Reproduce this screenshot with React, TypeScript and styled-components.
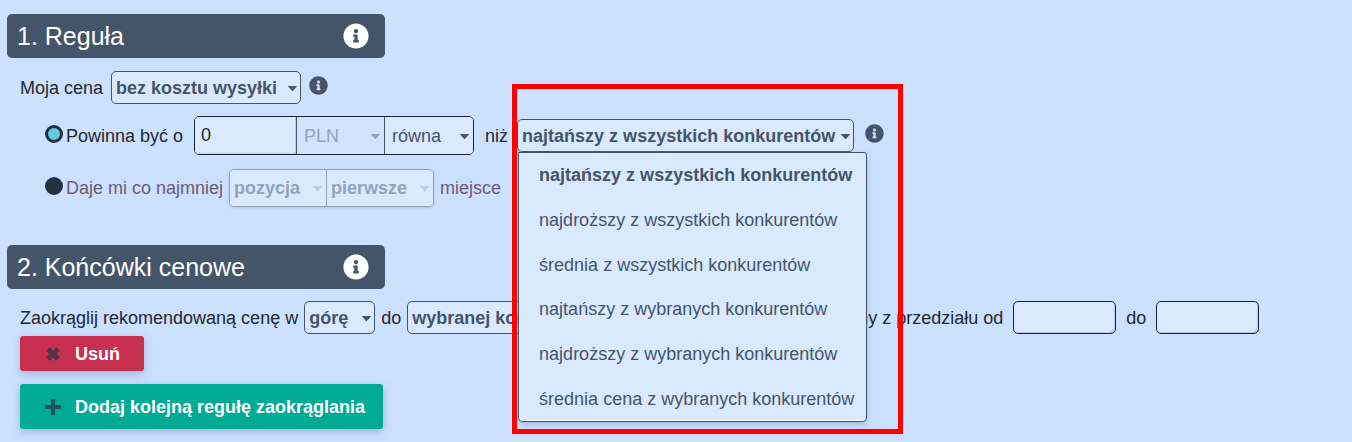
import React from "react";
import styled, { createGlobalStyle, css } from "styled-components";
import { FaInfoCircle } from "react-icons/fa";

const slate = "#455569";
const ink = "#1b2430";
const paper = "#d9e9ff";

const GlobalStyle = createGlobalStyle`
  *, *::before, *::after { box-sizing: border-box; }
  body {
    margin: 0;
    background: #cce0ff;
    color: #23282e;
    font: 18px/22px "Liberation Sans", Arial, sans-serif;
  }
`;

const Page = styled.main`
  padding: 14px 7px 13px;
`;

const SectionBar = styled.header`
  display: flex;
  align-items: center;
  justify-content: space-between;
  width: 378px;
  max-width: 100%;
  height: 44px;
  padding: 0 16px 0 10px;
  border-radius: 5px;
  background: ${slate};
  color: #fff;
`;

const SectionTitle = styled.h2`
  margin: 0;
  font-size: 25px;
  font-weight: 400;
  line-height: 32px;
`;

const InfoButton = styled.button<{ $large?: boolean }>`
  display: flex;
  flex: none;
  margin: 0 0 ${(p) => (p.$large ? 0 : 4)}px;
  padding: 0;
  border: 0;
  background: none;
  color: ${(p) => (p.$large ? "#fff" : slate)};
  font-size: ${(p) => (p.$large ? 26 : 19)}px;
  cursor: pointer;
`;

const Row = styled.div<{ $height: number; $gap: number; $indent?: number; $muted?: boolean }>`
  display: flex;
  align-items: center;
  gap: ${(p) => p.$gap}px;
  height: ${(p) => p.$height}px;
  padding-left: ${(p) => p.$indent ?? 13}px;
  white-space: nowrap;
  color: ${(p) => (p.$muted ? "#705b76" : "inherit")};
`;

const Range = styled.div`
  display: flex;
  align-items: center;
  gap: 10px;
`;

const RadioLabel = styled.label`
  display: flex;
  align-items: center;
  gap: 3px;
`;

const Radio = styled.input`
  appearance: none;
  flex: none;
  width: 18px;
  height: 18px;
  margin: 0 0 4px;
  border: 3px solid #243040;
  border-radius: 50%;
  background: #243040;
  &:checked { background: #63c9de; }
`;

const SelectBox = styled.span<{ $width: number }>`
  position: relative;
  display: flex;
  flex: none;
  width: ${(p) => p.$width}px;
`;

const StyledSelect = styled.select<{ $regular?: boolean; $bare?: boolean }>`
  appearance: none;
  width: 100%;
  height: 33px;
  padding: 0 14px 0 4px;
  border: 1px solid ${slate};
  border-radius: 5px;
  background: ${paper};
  color: ${slate};
  font: inherit;
  font-weight: ${(p) => (p.$regular ? 400 : 700)};
  opacity: 1;
  ${(p) =>
    p.$bare &&
    css`
      height: 100%;
      border: 0;
      border-radius: 0;
    `}
  ${(p) => p.$bare && p.$regular && css`padding-left: 7px;`}
  &:disabled { color: #93a3bc; background: ${(p) => (p.$regular ? "#d1e4ff" : paper)}; }
`;

const Caret = styled.svg<{ $tone?: string }>`
  position: absolute;
  top: calc(50% - 2px);
  right: 4px;
  width: 9px;
  height: 5px;
  fill: ${(p) => p.$tone ?? slate};
  pointer-events: none;
`;

const Group = styled.div<{ $muted?: boolean }>`
  display: flex;
  flex: none;
  height: ${(p) => (p.$muted ? 38 : 39)}px;
  border: 1px solid ${(p) => (p.$muted ? "#93a3bc" : ink)};
  border-radius: 5px;
  overflow: hidden;
  box-shadow: ${(p) => (p.$muted ? "0 1px 3px #7f94b366" : "none")};
  > * + * { border-left: 1px solid ${(p) => (p.$muted ? "#93a3bc" : slate)}; }
`;

const TextInput = styled.input<{ $bare?: boolean }>`
  width: ${(p) => (p.$bare ? 101 : 103)}px;
  height: ${(p) => (p.$bare ? "100%" : "33px")};
  padding: 0 6px;
  border: ${(p) => (p.$bare ? "0" : `1px solid ${ink}`)};
  border-radius: ${(p) => (p.$bare ? 0 : 5)}px;
  background: ${paper};
  box-shadow: inset -2px -2px 1px -1px #b4c8e6;
  color: #23282e;
  font: inherit;
`;

const MenuAnchor = styled.div`
  position: relative;
  margin-left: -2px;
`;

const Menu = styled.ul`
  position: absolute;
  z-index: 2;
  top: 100%;
  left: 1px;
  display: grid;
  grid-auto-rows: 1fr;
  width: 349px;
  height: 270px;
  margin: 0;
  padding: 0;
  border: 1px solid ${slate};
  border-radius: 0 3px 4px 4px;
  background: ${paper};
  box-shadow: 0 3px 6px #6079a055, inset 0 -1px #fff;
  list-style: none;
`;

const MenuItem = styled.li`
  display: flex;
  align-items: center;
  padding-left: 20px;
  color: ${slate};
  &[aria-selected="true"] { font-weight: 700; }
`;

const Highlight = styled.div`
  position: absolute;
  z-index: 3;
  top: -35px;
  left: -5px;
  width: 391px;
  height: 350px;
  border: 5px solid #f00;
  pointer-events: none;
`;

const SecondSection = styled.section`
  padding-top: 23px;
  > header { margin-bottom: 12px; }
`;

const Actions = styled.div`
  display: flex;
  flex-direction: column;
  align-items: flex-start;
  gap: 13px;
  padding: 2px 0 0 13px;
`;

const ActionButton = styled.button<{ $danger?: boolean }>`
  display: flex;
  align-items: center;
  gap: 13px;
  height: ${(p) => (p.$danger ? 35 : 45)}px;
  padding: 0 ${(p) => (p.$danger ? 24 : 18)}px 0 24px;
  border: 0;
  border-radius: 3px;
  background: ${(p) => (p.$danger ? "#c62f4f" : "#00aa95")};
  box-shadow: 0 3px 8px #7088b077;
  color: #fff;
  font: inherit;
  font-weight: 700;
  svg { width: 18px; height: 18px; fill: none; stroke: #2b3648; opacity: 0.75; }
`;

type PickerProps = {
  label: string;
  width: number;
  options: string[];
  regular?: boolean;
  bare?: boolean;
  disabled?: boolean;
  tone?: string;
};

function Picker({ label, width, options, regular, bare, disabled, tone }: PickerProps) {
  return (
    <SelectBox $width={width}>
      <StyledSelect aria-label={label} $regular={regular} $bare={bare} disabled={disabled}>
        {options.map((option) => (
          <option key={option}>{option}</option>
        ))}
      </StyledSelect>
      <Caret viewBox="0 0 9 5" $tone={tone} aria-hidden="true">
        <path d="M0.6 0h7.8q.8 0 .3.7L5.1 4.7q-.6.5-1.2 0L.3.7Q-.2 0 .6 0z" />
      </Caret>
    </SelectBox>
  );
}

function Info({ large }: { large?: boolean }) {
  return (
    <InfoButton type="button" $large={large} aria-label="Informacja">
      <FaInfoCircle />
    </InfoButton>
  );
}

const competitors = [
  "najtańszy z wszystkich konkurentów",
  "najdroższy z wszystkich konkurentów",
  "średnia z wszystkich konkurentów",
  "najtańszy z wybranych konkurentów",
  "najdroższy z wybranych konkurentów",
  "średnia cena z wybranych konkurentów",
];

export default function App() {
  return (
    <Page>
      <GlobalStyle />
      <section>
        <SectionBar>
          <SectionTitle>1. Reguła</SectionTitle>
          <Info large />
        </SectionBar>
        <Row $height={59} $gap={8}>
          <span>Moja cena</span>
          <Picker label="Moja cena" width={190} options={["bez kosztu wysyłki"]} />
          <Info />
        </Row>
        <Row $height={37} $gap={11} $indent={38}>
          <RadioLabel>
            <Radio type="radio" name="rule" defaultChecked />
            Powinna być o
          </RadioLabel>
          <Group>
            <TextInput $bare aria-label="Wartość" defaultValue="0" />
            <Picker label="Waluta" width={88} options={["PLN"]} regular bare disabled tone="#93a3bc" />
            <Picker label="Relacja" width={89} options={["równa"]} regular bare />
          </Group>
          <span>niż</span>
          <MenuAnchor>
            <Picker label="Konkurenci" width={337} options={competitors} />
            <Menu role="listbox" aria-label="Konkurenci">
              {competitors.map((name, index) => (
                <MenuItem key={name} role="option" aria-selected={index === 0}>
                  {name}
                </MenuItem>
              ))}
            </Menu>
            <Highlight />
          </MenuAnchor>
          <Info />
        </Row>
        <Row $height={68} $gap={6} $indent={38} $muted>
          <RadioLabel>
            <Radio type="radio" name="rule" />
            Daje mi co najmniej
          </RadioLabel>
          <Group $muted>
            <Picker label="Rodzaj" width={96} options={["pozycja"]} bare disabled tone="#bccde6" />
            <Picker label="Miejsce" width={107} options={["pierwsze"]} bare disabled tone="#bccde6" />
          </Group>
          <span>miejsce</span>
        </Row>
      </section>
      <SecondSection>
        <SectionBar>
          <SectionTitle>2. Końcówki cenowe</SectionTitle>
          <Info large />
        </SectionBar>
        <Row $height={33} $gap={6}>
          <span>Zaokrąglij rekomendowaną cenę w</span>
          <Picker label="Kierunek" width={71} options={["górę"]} />
          <span>do</span>
          <Picker label="Końcówka" width={426} options={["wybranej końcówki"]} />
          <Range>
            <span>ceny z przedziału od</span>
            <TextInput aria-label="Cena od" />
            <span>do</span>
            <TextInput aria-label="Cena do" />
          </Range>
        </Row>
        <Actions>
          <ActionButton type="button" $danger>
            <svg viewBox="0 0 18 18" strokeWidth="5" aria-hidden="true">
              <path d="M4 4 14 14M14 4 4 14" />
            </svg>
            Usuń
          </ActionButton>
          <ActionButton type="button">
            <svg viewBox="0 0 18 18" strokeWidth="4" aria-hidden="true">
              <path d="M9 1V17M1 9H17" />
            </svg>
            Dodaj kolejną regułę zaokrąglania
          </ActionButton>
        </Actions>
      </SecondSection>
    </Page>
  );
}
